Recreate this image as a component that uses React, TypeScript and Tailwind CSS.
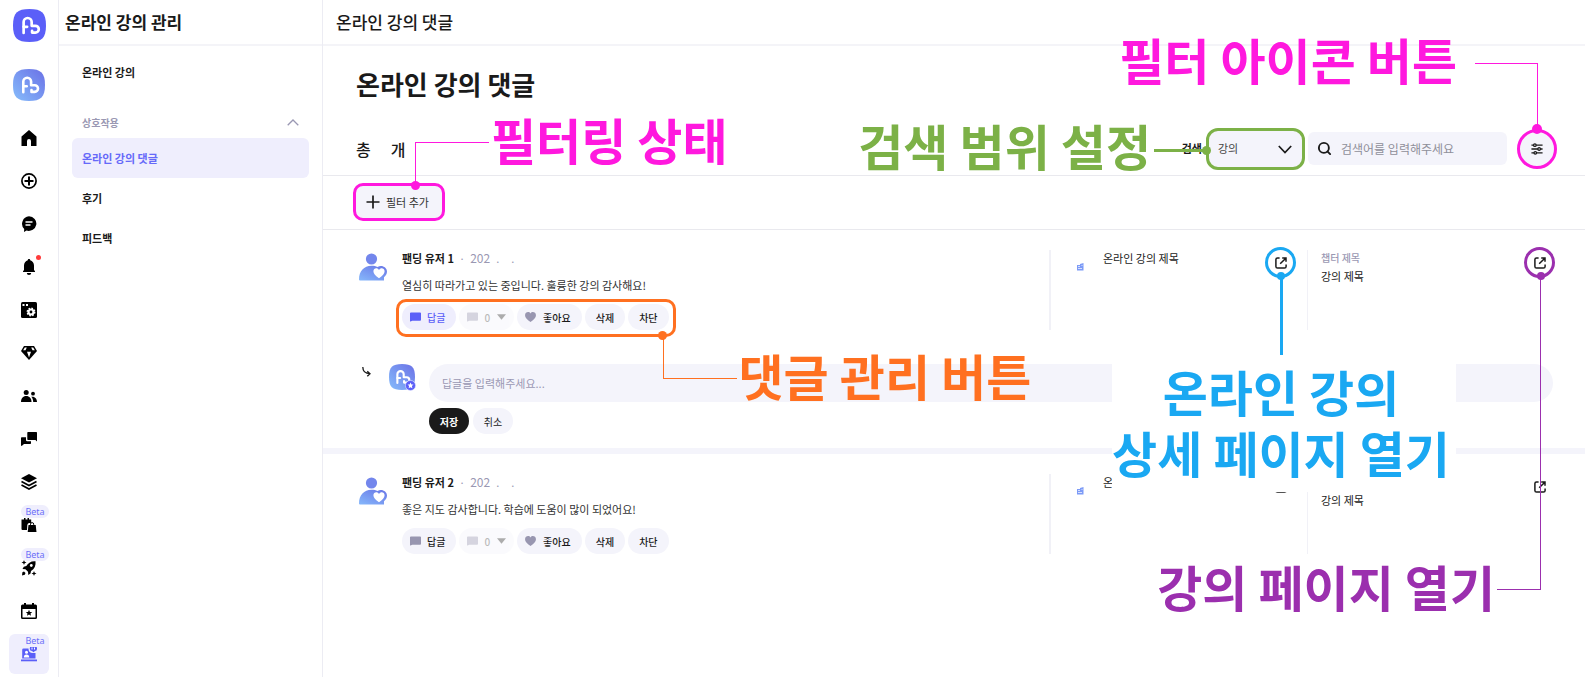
import type { ReactNode } from 'react';
import { Search } from 'lucide-react';

function Logo({ id, from, to, className }: { id: string; from: string; to: string; className: string }) {
    return (
        <svg viewBox="0 0 32 32" className={className} aria-hidden="true">
            <defs>
                <linearGradient id={id} x1="0" y1="1" x2="1" y2="0">
                    <stop offset="0" stopColor={from} />
                    <stop offset="1" stopColor={to} />
                </linearGradient>
            </defs>
            <path d="M16 0C28 0 32 4 32 16S28 32 16 32 0 28 0 16 4 0 16 0Z" fill={`url(#${id})`} />
            <g fill="none" stroke="#fff" strokeWidth="2.6" strokeLinecap="round" strokeLinejoin="round">
                <path d="M10.3 23.3V12.600a3.900 3.900 0 0 1 7.800 0V16.300h3.600a3.300 3.300 0 0 1 0 6.600h-3.200v-1.800" />
                <path d="M10.3 17.300h3.400" />
            </g>
        </svg>
    );
}

function Avatar() {
    return (
        <svg viewBox="0 0 28 28" className="h-7 w-7 shrink-0" aria-hidden="true">
            <defs>
                <linearGradient id="avatar" x1="0" y1="1" x2="0.8" y2="0">
                    <stop offset="0" stopColor="#86b8fb" />
                    <stop offset="1" stopColor="#6b7be8" />
                </linearGradient>
            </defs>
            <circle cx="12.5" cy="6" r="5.6" fill="#7386ec" />
            <path d="M0 26.5C0 18 5 12.7 12.5 12.7c2.6 0 4.4.4 6 1.2 4-2.6 9.5.2 9.5 4.6 0 2.5-1.3 4.3-3 5.800V27.500H1Q0 27.500 0 26.500Z" fill="url(#avatar)" />
            <path d="M20 25.200c-3.500-2.400-5.600-4.500-5.600-7 0-3.200 4-4 5.600-1.300 1.600-2.700 5.600-1.900 5.600 1.300 0 2.500-2.100 4.600-5.600 7Z" fill="#fff" />
        </svg>
    );
}

function ExternalIcon() {
    return (
        <svg viewBox="0 0 12 12" className="h-3 w-3" fill="none" stroke="#1a1a1a" strokeWidth="1.5" aria-hidden="true">
            <path d="M4.600 1H2.500Q.9 1 .9 2.600V9.500Q.9 11.100 2.500 11.100H9.500Q11.100 11.100 11.100 9.500V7.600" />
            <path d="M5.200 6.800 10.800 1.200M7.200 1H11V4.800" />
        </svg>
    );
}

function Bubble() {
    return (
        <svg viewBox="0 0 12 10" className="h-[10px] w-[11px]" fill="currentColor" aria-hidden="true">
            <path d="M1 0H11Q12 0 12 1V8Q12 9 11 9H2.500L.6 10Q0 10 0 9V1Q0 0 1 0Z" />
        </svg>
    );
}

const railItems: { name: string; beta?: boolean; dot?: boolean; active?: boolean; icon: ReactNode }[] = [
    { name: '홈', icon: <path d="M8 0 15.500 6.500V16H10V11a2 2 0 0 0-4 0v5H.5V6.500Z" /> },
    {
        name: '만들기',
        icon: (
            <g fill="none" stroke="currentColor" strokeWidth="1.700">
                <circle cx="8" cy="8" r="7.100" />
                <path d="M8 3.500v9M3.500 8h9" strokeWidth="2" />
            </g>
        ),
    },
    {
        name: '메시지',
        icon: (
            <>
                <path d="M8 .3a7.700 7.300 0 1 1-2.500 14.300L3 16 3.200 13A7.500 7.500 0 0 1 8 .3Z" />
                <path d="M4.500 6h7M4.500 9h5" stroke="#fff" strokeWidth="1.300" />
            </>
        ),
    },
    {
        name: '알림',
        dot: true,
        icon: <path d="M8 0c.8 0 1.200.5 1.200 1.200C11.500 2 13 4 13 6.500V11l1 1.200V13H2v-.8L3 11V6.500C3 4 4.500 2 6.800 1.200 6.800.5 7.200 0 8 0ZM5.800 14h4.400a2.200 2 0 0 1-4.400 0Z" />,
    },
    {
        name: '페이지 설정',
        icon: (
            <>
                <rect width="16" height="16" rx="1.500" />
                <path d="M1.500 2h2v2h-2zM5 2h2v2H5z" fill="#fff" />
                <circle cx="10" cy="10" r="3.700" fill="none" stroke="#fff" strokeWidth="1.500" strokeDasharray="1.600 1.300" />
                <circle cx="10" cy="10" r="2.500" fill="none" stroke="#fff" strokeWidth="2.200" />
            </>
        ),
    },
    {
        name: '멤버십',
        icon: (
            <>
                <path d="M3 1H13L16 6 8 15 0 6Z" />
                <path d="M3.800 2.500H5.800L4.500 5.200H2.200ZM12.200 2.500H10.200L11.500 5.200H13.800ZM6 6.700H10L8 12.500Z" fill="#fff" />
            </>
        ),
    },
    {
        name: '회원',
        icon: (
            <>
                <circle cx="5.200" cy="4.500" r="2.500" />
                <path d="M0 14C0 10.500 2 8 5.200 8s5.300 2.500 5.300 6Z" />
                <circle cx="12" cy="5.700" r="1.900" />
                <path d="M10.300 8.800C13.500 8 16 10.500 16 14h-3.800c0-2-.6-3.800-1.900-5.200Z" />
            </>
        ),
    },
    {
        name: '커뮤니티',
        icon: (
            <path d="M7 1h8.300q.7 0 .7.7V10.500L14.500 9H7q-.7 0-.7-.7V1.700q0-.7.700-.7ZM0 7q0-.7.700-.7H5V9q0 1.200 1.200 1.200H10V12.300q0 .7-.7.700H3L.7 15 0 14.500Z" />
        ),
    },
    {
        name: '콘텐츠',
        icon: (
            <>
                <path d="M8 0 16 4.200 8 8.400 0 4.200Z" />
                <path d="M.5 7.500 8 11.500 15.500 7.500M.5 11 8 15 15.500 11" fill="none" stroke="currentColor" strokeWidth="1.700" />
            </>
        ),
    },
    {
        name: '상품',
        beta: true,
        icon: (
            <>
                <path d="M.5 2.500H3V1h1.500v1.500h2V1H8v1.500h2.200V6H8Q6.500 6.500 6.300 8L6 13H1.500q-1 0-1-1Z" />
                <path d="M7.500 8h7.200L15.500 15H6.700Z" />
                <path d="M9.500 8V7.200a1.600 1.600 0 0 1 3.200 0V8" fill="none" stroke="currentColor" />
            </>
        ),
    },
    {
        name: '캠페인',
        beta: true,
        icon: (
            <>
                <path d="M14.500 1.200C10 .8 7 3 5.300 6L2.800 6.700 1.500 9l3 .3L7 11.800 7.300 15 9.500 13.500 10 11C13.500 9 15 5.500 14.500 1.200Z" />
                <circle cx="10.300" cy="5.500" r="1.400" fill="#fff" />
                <path d="M1 15.500 1.400 12.200 3 11.500 4.500 13 3.800 14.800ZM3 0l.7 1.800 1.800.7-1.800.7L3 5l-.7-1.800L.5 2.500l1.800-.7ZM13 11l.7 1.800 1.800.7-1.800.7L13 16l-.7-1.800-1.800-.7 1.800-.7Z" />
            </>
        ),
    },
    {
        name: '일정',
        icon: (
            <>
                <path d="M1.500 1.500H3V0h2v1.500h6V0h2v1.500h1.500Q16 1.500 16 3V14.500Q16 16 14.500 16H1.500Q0 16 0 14.500V3Q0 1.500 1.500 1.500ZM1.500 6V14.500H14.500V6Z" fillRule="evenodd" />
                <path d="m8 6.800.9 2.100 2.300.2-1.700 1.500.5 2.200L8 11.600l-2 1.200.5-2.200-1.700-1.500 2.300-.2Z" />
            </>
        ),
    },
    {
        name: '온라인 강의',
        beta: true,
        active: true,
        icon: (
            <>
                <path d="M2.500 2.500H7.500Q7.500 6.500 11 7H14.500V12.500H1.200V3.800Q1.200 2.500 2.500 2.500Z" />
                <path d="M0 13.500H16V15.300H0Z" />
                <circle cx="5.500" cy="6.300" r="1.500" fill="#fff" />
                <path d="M2.800 11.500Q2.800 8.500 5.500 8.500T8.300 11.500Z" fill="#fff" />
                <path d="M10.500 0H14q2 0 2 2v1q0 1.800-2 2l-1.500 1.300L11 5Q8.800 4.800 8.800 3V2q0-2 1.700-2Z" />
                <path d="M11 1.500v2M13.500 1.500v2" stroke="#fff" strokeWidth="1" />
            </>
        ),
    },
];

function Rail() {
    return (
        <nav aria-label="주 메뉴" className="flex w-[59px] shrink-0 flex-col items-center border-r border-[#ececf3] pt-[9px]">
            <Logo id="brand" from="#5b5ff8" to="#5b5ff8" className="h-[33px] w-[33px]" />
            <Logo id="channel" from="#86bdfb" to="#6a70e6" className="mt-[27px] h-8 w-8" />
            <ul className="mt-[17px] flex flex-col gap-[3px]">
                {railItems.map((item) => (
                    <li key={item.name}>
                        <a
                            href="#"
                            aria-label={item.name}
                            className={`relative flex h-10 w-10 items-center justify-center rounded-md ${item.active ? 'bg-[#efeefd] text-[#5b5ff8]' : 'text-black'}`}
                        >
                            <svg viewBox="0 0 16 16" className="h-4 w-4" fill="currentColor" aria-hidden="true">
                                {item.icon}
                            </svg>
                            {item.beta && (
                                <span className="absolute top-0 right-0 flex h-[13px] w-7 items-center justify-center rounded-full bg-[#efeefd] font-['Noto_Sans'] text-[9px] text-[#6c6ff8]">
                                    Beta
                                </span>
                            )}
                            {item.dot && <span className="absolute top-2 right-2 h-[5px] w-[5px] rounded-full bg-[#ff3b3b]" />}
                        </a>
                    </li>
                ))}
            </ul>
        </nav>
    );
}

function Sidebar() {
    return (
        <aside className="w-[264px] shrink-0 border-r border-[#ececf3] text-[11px] font-bold">
            <h2 className="flex h-[46px] items-center border-b-2 border-[#f4f4f8] px-[6px] text-[17px]">온라인 강의 관리</h2>
            <nav aria-label="온라인 강의 관리" className="px-[13px] pt-[6px]">
                <a href="#" className="flex h-10 items-center px-[10px]">온라인 강의</a>
                <button type="button" className="mt-[14px] flex h-8 w-full items-center justify-between px-[10px] text-[10px] text-[#9a98b3]">
                    상호작용
                    <svg viewBox="0 0 12 7" className="h-[7px] w-3" fill="none" stroke="currentColor" strokeWidth="1.300" aria-hidden="true">
                        <path d="M.7 6.300 6 1 11.300 6.300" />
                    </svg>
                </button>
                <a href="#" className="flex h-10 items-center rounded-md bg-[#efeefd] px-[10px] text-[#6669f9]">온라인 강의 댓글</a>
                <a href="#" className="flex h-10 items-center px-[10px]">후기</a>
                <a href="#" className="flex h-10 items-center px-[10px]">피드백</a>
            </nav>
        </aside>
    );
}

const labelText = 'absolute whitespace-nowrap text-[49px] leading-[60px] font-bold';

function Toolbar() {
    return (
        <div className="flex h-[46px] items-center border-b border-[#e9e9ee] pr-7 pb-2 pl-[33px]">
            <p className="flex gap-5 text-[16px] font-medium">
                <span>총</span>
                <span>개</span>
            </p>
            <form className="ml-auto flex items-center">
                <label htmlFor="scope" className="mr-1 text-[11px] font-bold">검색</label>
                <div className="relative">
                    <select id="scope" className="block h-[42px] w-[99px] appearance-none rounded-xl border-3 border-[#7cb147] bg-[#f4f4fb] px-[9px] text-[11px] text-[#444]">
                        <option>강의</option>
                        <option>온라인 강의</option>
                    </select>
                    <svg viewBox="0 0 14 9" className="pointer-events-none absolute top-[17px] right-[13px] h-[9px] w-[14px]" fill="none" stroke="#1a1a1a" strokeWidth="1.700" aria-hidden="true">
                        <path d="M.8 1 7 7.600 13.200 1" />
                    </svg>
                    <span className="absolute top-[21px] right-full h-[3px] w-[52px] bg-[#7cb147]" />
                    <span className="absolute top-[18px] -left-1 h-[9px] w-[9px] rounded-full bg-[#7cb147]" />
                    <span className={`${labelText} -top-[13px] right-[154px] text-[#7cb147]`}>검색 범위 설정</span>
                </div>
                <label className="ml-[3px] flex h-[33px] w-[199px] items-center gap-[9px] rounded-md bg-[#f4f4fb] pl-[9px]">
                    <Search className="h-[15px] w-[15px] shrink-0" strokeWidth={3} aria-hidden="true" />
                    <input type="text" aria-label="검색어" placeholder="검색어를 입력해주세요" className="min-w-0 flex-1 bg-transparent text-[12px] outline-none placeholder:text-[#8f8f99]" />
                </label>
                <div className="relative ml-[10px]">
                    <button type="button" aria-label="필터" className="flex h-10 w-10 items-center justify-center rounded-full border-3 border-[#ff18de] bg-[#f4f4fb]">
                        <svg viewBox="0 0 14 14" className="h-3 w-3" fill="#f4f4fb" stroke="#1a1a1a" strokeWidth="1.500" aria-hidden="true">
                            <path d="M.5 2.500H13.500M.5 7H13.500M.5 11.500H13.500" />
                            <circle cx="4.500" cy="2.500" r="1.500" />
                            <circle cx="9.500" cy="7" r="1.500" />
                            <circle cx="5" cy="11.500" r="1.500" />
                        </svg>
                    </button>
                    <span className="absolute right-[19px] bottom-10 h-[66px] w-[63px] border-t border-r border-[#ff18de]" />
                    <span className="absolute -top-[5px] left-[15px] h-[10px] w-[10px] rounded-full bg-[#ff18de]" />
                    <span className={`${labelText} -top-[100px] right-[100px] text-[#ff18de]`}>필터 아이콘 버튼</span>
                </div>
            </form>
        </div>
    );
}

function FilterBar() {
    return (
        <div className="h-[54px] border-b border-[#e9e9ee] pt-[7px] pl-[30px]">
            <div className="relative w-fit">
                <button type="button" className="flex h-[38px] items-center gap-[6px] rounded-[10px] border-3 border-[#ff18de] bg-[#f4f4fb] pr-[13px] pl-[10px] text-[11px]">
                    <svg viewBox="0 0 14 14" className="h-[14px] w-[14px]" stroke="#1a1a1a" strokeWidth="1.700" aria-hidden="true">
                        <path d="M7 .5v13M.5 7h13" />
                    </svg>
                    <span className="text-[#333]">필터 추가</span>
                </button>
                <span className="absolute bottom-9 left-[62px] h-[43px] w-[74px] border-t border-l border-[#ff18de]" />
                <span className="absolute -top-[2px] left-[58px] h-[9px] w-[9px] rounded-full bg-[#ff18de]" />
                <span className={`${labelText} -top-[74px] left-[138px] text-[#ff18de]`}>필터링 상태</span>
            </div>
        </div>
    );
}

const pill = 'flex h-[26px] items-center rounded-full text-[10px] font-medium';

function Actions({ replying }: { replying?: boolean }) {
    return (
        <div className="relative mt-[10px] flex w-fit gap-[3px]">
            <button type="button" className={`${pill} gap-[6px] pr-[11px] pl-2 ${replying ? 'bg-[#efeefd] text-[#5b5ff8]' : 'bg-[#f4f4fb]'}`}>
                <span className={replying ? '' : 'text-[#9896b0]'}><Bubble /></span>
                답글
            </button>
            <button type="button" className={`${pill} gap-[6px] bg-[#f4f4fb] px-2 opacity-40`}>
                <span className="text-[#9896b0]"><Bubble /></span>
                <span className="text-[#555]">0</span>
                <svg viewBox="0 0 10 6" className="ml-px h-[6px] w-[9px]" aria-hidden="true">
                    <path d="M0 0H10L5 6Z" fill="#333" />
                </svg>
            </button>
            <button type="button" className={`${pill} gap-[7px] bg-[#f4f4fb] pr-[11px] pl-2`}>
                <svg viewBox="0 0 12 11" className="h-[10px] w-[11px]" fill="#9896b0" aria-hidden="true">
                    <path d="M6 11C2 8 0 6 0 3.500 0 .2 4.300-1.200 6 1.600 7.700-1.200 12 .2 12 3.500 12 6 10 8 6 11Z" />
                </svg>
                좋아요
            </button>
            <button type="button" className={`${pill} bg-[#f4f4fb] px-[11px]`}>삭제</button>
            <button type="button" className={`${pill} bg-[#f4f4fb] px-[11px]`}>차단</button>
            {replying && (
                <>
                    <span className="pointer-events-none absolute -top-[5px] -right-[7px] -bottom-[7px] -left-[6px] rounded-[10px] border-3 border-[#ff7020]" />
                    <span className="absolute top-8 right-[-68px] h-[43px] w-[74px] border-b border-l border-[#ff7020]" />
                    <span className="absolute top-[27px] right-[2px] h-[9px] w-[9px] rounded-full bg-[#ff7020]" />
                    <span className={`${labelText} top-[41px] left-[calc(100%+70px)] z-10 text-[#ff7020]`}>댓글 관리 버튼</span>
                </>
            )}
        </div>
    );
}

function Comment({ name, text, replying }: { name: string; text: string; replying?: boolean }) {
    return (
        <div className="flex pl-9">
            <div className="flex min-w-0 flex-1 gap-[15px]">
                <div className="pt-[3px]"><Avatar /></div>
                <div>
                    <p className="flex h-4 items-center text-[11px] text-[#9a98b3]">
                        <strong className="font-bold text-[#1a1a1a]">{name}</strong>
                        <span className="mx-[5px]">·</span>
                        <span className="text-[12px]">202</span>
                        <span className="ml-[6px]">.</span>
                        <span className="ml-3">.</span>
                    </p>
                    <p className="mt-[10px] text-[11px] leading-[18px] text-[#333]">{text}</p>
                    <Actions replying={replying} />
                </div>
            </div>
            <div className="flex w-[258px] shrink-0 border-l-2 border-[#f1f1f7] pr-5">
                <svg viewBox="0 0 7 8" className="mt-[13px] ml-[26px] h-2 w-[7px]" fill="#7d9bf7" aria-hidden="true">
                    <path d="M0 2H3V1L6.500 0V7.500H0Z" />
                    <path d="M1 3.500h2M1 5.500h4M4.500 2.500h1" stroke="#fff" strokeWidth=".7" />
                </svg>
                <p className="ml-[19px] text-[11px] leading-4 text-[#1a1a1a]">온라인 강의 제목</p>
                <div className="relative mt-[7px] ml-auto h-3">
                    <a href="#" aria-label="온라인 강의 상세 페이지 열기" className="block"><ExternalIcon /></a>
                    {replying && (
                        <>
                            <span className="pointer-events-none absolute -top-[10px] -left-[10px] h-[31px] w-[31px] rounded-full border-3 border-[#1aa8f2]" />
                            <span className="absolute top-[15px] left-[2px] h-2 w-2 rounded-full bg-[#1aa8f2]" />
                            <span className="absolute top-5 left-[5px] h-[78px] w-[3px] bg-[#1aa8f2]" />
                            <span className="absolute top-[98px] -left-[163px] z-10 h-[137px] w-[344px] bg-white pt-[5px] pr-[6px] text-center text-[49px] leading-[61px] font-bold whitespace-nowrap text-[#1aa8f2]">
                                온라인 강의
                                <br />
                                상세 페이지 열기
                            </span>
                        </>
                    )}
                </div>
            </div>
            <div className="flex w-[278px] shrink-0 border-l border-[#f1f1f7] pr-[39px] pl-[13px]">
                <div>
                    <p className="text-[10px] leading-[15px] font-medium text-[#9a98b3]">챕터 제목</p>
                    <p className="mt-[2px] text-[11px] leading-[18px]">강의 제목</p>
                </div>
                <div className="relative mt-[7px] ml-auto h-3">
                    <a href="#" aria-label="강의 페이지 열기" className="block"><ExternalIcon /></a>
                    {replying && (
                        <>
                            <span className="pointer-events-none absolute -top-[10px] -left-[10px] h-[31px] w-[31px] rounded-full border-3 border-[#9b2fae]" />
                            <span className="absolute top-[15px] left-[3px] h-2 w-2 rounded-full bg-[#9b2fae]" />
                            <span className="absolute top-5 right-[5px] z-10 h-[313px] w-11 border-r border-b border-[#9b2fae]" />
                            <span className={`${labelText} top-[299px] right-[51px] text-[#9b2fae]`}>강의 페이지 열기</span>
                        </>
                    )}
                </div>
            </div>
        </div>
    );
}

function ReplyForm() {
    return (
        <form className="mt-[34px] flex pr-8 pl-[39px]">
            <svg viewBox="0 0 9 10" className="mt-[3px] h-[10px] w-[9px]" fill="none" stroke="#1a1a1a" strokeWidth="1.300" aria-hidden="true">
                <path d="M.8 0C.8 4 2.500 6.500 8 6.700M5.300 4.200 8 6.700 5.300 9.300" />
            </svg>
            <div className="relative ml-[18px] h-[26px]">
                <Logo id="reply" from="#86bdfb" to="#6a70e6" className="h-[26px] w-[26px]" />
                <svg viewBox="0 0 10 10" className="absolute -right-px -bottom-px h-[11px] w-[11px]" aria-hidden="true">
                    <circle cx="5" cy="5" r="4.600" fill="#5b5ff8" stroke="#dfe2fd" strokeWidth=".6" />
                    <path d="m5 2.300.8 1.700 1.900.2-1.400 1.300.4 1.900L5 6.500l-1.700.9.4-1.900-1.400-1.300L4.200 4Z" fill="#fff" />
                </svg>
            </div>
            <div className="ml-[14px] min-w-0 flex-1">
                <input type="text" aria-label="답글" placeholder="답글을 입력해주세요..." className="block h-[38px] w-full rounded-full bg-[#f4f4fb] px-[13px] text-[11px] outline-none placeholder:text-[#9a98b3]" />
                <div className="mt-[6px] flex gap-1">
                    <button type="button" className="h-[26px] w-10 rounded-full bg-[#1a1a1a] text-[10px] font-bold text-white">저장</button>
                    <button type="button" className="h-[26px] w-10 rounded-full bg-[#f4f4fb] text-[10px]">취소</button>
                </div>
            </div>
        </form>
    );
}

export default function App() {
    return (
        <div className="flex min-h-screen overflow-hidden bg-white font-['Noto_Sans_CJK_KR',sans-serif] text-[#1a1a1a]">
            <Rail />
            <Sidebar />
            <main className="min-w-0 flex-1">
                <header className="flex h-[46px] items-center border-b-2 border-[#f4f4f8] px-[13px] text-[17px] font-medium">온라인 강의 댓글</header>
                <h1 className="pt-[18px] pb-[26px] pl-[33px] text-[26px] leading-10 font-bold">온라인 강의 댓글</h1>
                <Toolbar />
                <FilterBar />
                <section className="border-b-6 border-[#f4f4fb] pt-5 pb-[14px]">
                    <Comment name="팬딩 유저 1" text="열심히 따라가고 있는 중입니다. 훌륭한 강의 감사해요!" replying />
                    <ReplyForm />
                </section>
                <section className="pt-5 pb-[14px]">
                    <Comment name="팬딩 유저 2" text="좋은 지도 감사합니다. 학습에 도움이 많이 되었어요!" />
                </section>
            </main>
        </div>
    );
}
